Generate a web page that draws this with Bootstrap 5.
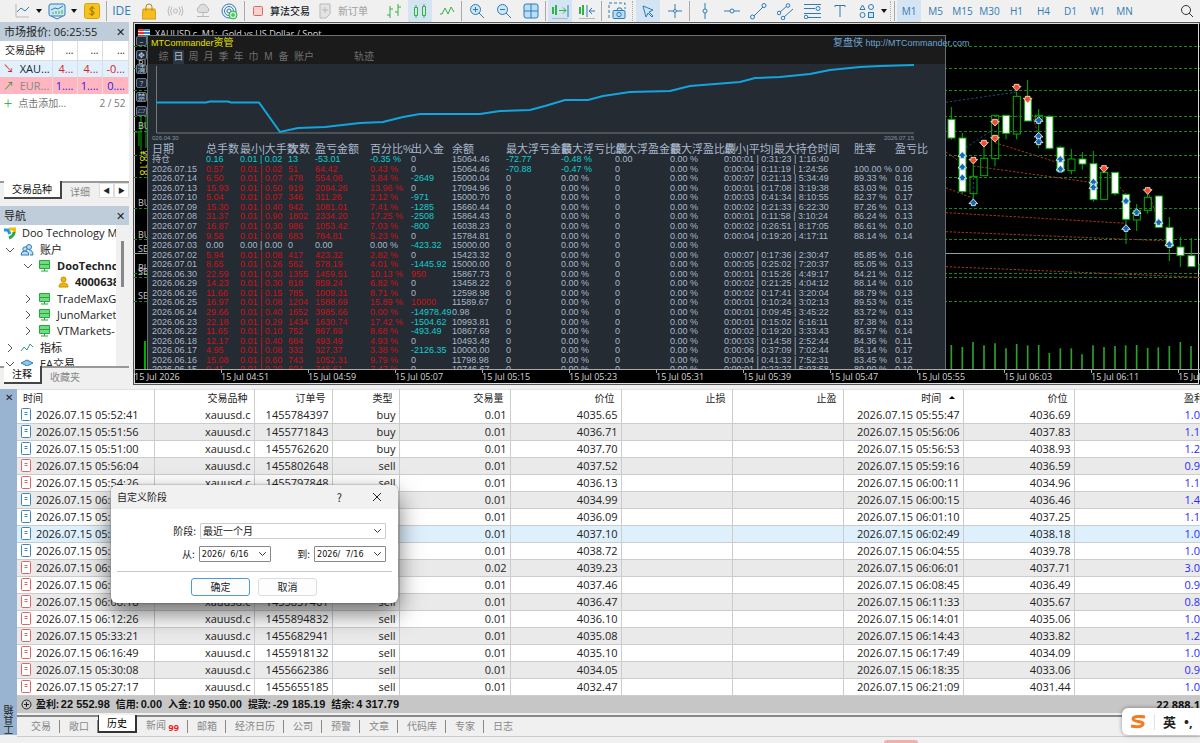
<!DOCTYPE html>
<html lang="zh-CN">
<head>
<meta charset="utf-8">
<meta name="viewport" content="width=device-width, initial-scale=1">
<title>XAUUSD.c, M1</title>
<link href="https://cdn.jsdelivr.net/npm/bootstrap@5.3.0/dist/css/bootstrap.min.css" rel="stylesheet">
<style>
body{font:11px/16px "Open Sans","Noto Sans CJK SC",sans-serif;color:#222;background:#f0f0f0;height:100vh;min-height:700px}
button,input,select{font:inherit;color:inherit}
svg{display:block;flex:none}
/* toolbar */
.tools{height:22px;padding-left:8px;background:#f0f0f0}
.tools button{border:0;background:none;padding:0;height:22px;width:27px;display:flex;align-items:center;justify-content:center;color:#2f7cb5;font-size:10px;font-weight:500;flex:none;white-space:nowrap}
.tools button.ide{font-size:12px}
.tools button.on{background:#d5e4f2;width:24px;margin:0 1px}
.tools button.caret{width:8px}
.tools button.wide{width:auto}
.tools .orders{margin-right:12px;color:#aaa}
.tools svg{fill:none;stroke:#2f7cb5}
.tools .ar{fill:#111;stroke:none}
.tools .gn{stroke:#2fb344}
.tools .gy{stroke:#b8b8b8}
.sep{width:1px;height:20px;background:#aaa;margin:0 1px;flex:none}
.grip{width:0;height:20px;border-left:1px dotted #aaa;margin:0 2px;flex:none}
/* left docks */
.dock{width:129px;flex:none}
.dock-title{background:#bfcddb;height:19px;padding:0 4px;line-height:19px}
.xbtn{border:0;background:none;padding:0;line-height:16px}
.quotes{table-layout:fixed;width:100%;line-height:16px}
.quotes td,.quotes th{border-right:1px solid #ddd;height:17px;padding:0 3px;text-align:right;font-weight:400;white-space:nowrap;overflow:hidden}
.quotes th:first-child,.quotes td:first-child{text-align:left}
.quotes thead th{height:19px;border-bottom:1px solid #ddd;font-size:10px;padding-left:5px}
.quotes .up{background:#e0f0fd;color:#e02020}
.quotes .dn{background:#ffb6c1;color:#2222ee}
.quotes .more td{border:0;color:#777;font-size:10px}
.edge{border-top:2px solid #999}
.dtab{border:0;background:none;color:#888;height:18px;padding:0 8px;line-height:16px;font-size:10px;white-space:nowrap}
.dtab.on{background:#fff;color:#111;border:solid #444;border-width:0 2px 2px 0;margin-top:-2px}
.step{width:15px;height:15px;border:1px solid #ddd;background:#fff;padding:0;font-size:7px;line-height:12px}
.tree{display:grid;grid-auto-rows:1fr;height:147px;font-size:11px}
.tree>li{display:flex;align-items:center;gap:6px;white-space:nowrap}
.l0{padding-left:3px;gap:5px}.l1{padding-left:6px}.l2{padding-left:24px}.l3{padding-left:58px}
.thumb{width:3px;height:46px;background:#888;margin:16px 5px 0}
/* chart window */
.win{border:solid #555;border-width:2px 0 1px 1px;background:#000;outline:1px solid #ddd;outline-offset:-2px}
.axis{height:15px;border-top:1px solid #aaa;font-size:9px;line-height:14px;color:#d5d5d5}
.axis span{flex:0 0 87px;white-space:nowrap}
.axis span::before{content:"";display:block;width:1px;height:3px;background:#aaa;margin-bottom:-3px}
.mtc{position:absolute;left:13px;right:254px;top:11px;bottom:0;background:#242b33;border:solid #666e76;border-width:1px 1px 0;color:#a9b8cc;font-family:"Liberation Sans","Noto Sans CJK SC",sans-serif}
.mtc-head{background:#1b1b1b;height:28px;line-height:14px;font-size:9px}
.mtc-head .cjk{font-size:10px}
.mtc-menu{gap:4px;padding-left:10px;font-size:10px;color:#707070;line-height:14px}
.mtc-menu a{color:inherit;text-decoration:none;width:11px;white-space:nowrap;text-align:center}
.mtc-menu a.duo{width:22px}
.mtc-menu a.far{margin-left:34px}
.mtc-menu a.on{background:#2c3642;color:#a9b8cc}
.site{position:absolute;left:685px;top:0;color:#6aa5d2;text-decoration:none;white-space:nowrap}
.rank-box{padding:2px 0 0 4px}
.rank{font-size:9px;line-height:9px;width:100%}
.rank tr{display:grid;grid-template-columns:54px 34px 48px 27px 55px 41px 41px 54px 55px 54px 55px 54px 130px 41px 1fr;white-space:nowrap}
.rank th{font-weight:400;font-size:11px;line-height:11px;padding:0}
.rank td{padding:0}
.rank tbody{display:grid;grid-auto-rows:1fr;height:220px}
.rank .r{color:#d01018}.rank .c{color:#10cfd0}
.knobs{position:absolute;left:2px;top:12px;width:11px}
.knobs button{display:flex;justify-content:center;align-items:center;width:11px;height:10px;padding:0;border:1px solid #66788e;background:#222c38;color:#b8c8dc;font-size:8px;line-height:8px;border-radius:2px}
/* toolbox */
.strip{width:17px;background:#99b4d1;flex:none;font-size:10px}
.strip span{writing-mode:vertical-rl;transform:rotate(180deg);line-height:16px;white-space:nowrap}
.hist{table-layout:fixed;width:100%;line-height:16px;background:#fff}
.hist th,.hist td{height:17px;padding:0 3px 0 4px;border-right:1px solid #ccc;text-align:right;font-weight:400;white-space:nowrap}
.hist td{border-bottom:1px solid #ccc}
.hist th{padding:0 6px;font-size:10px}
.hist th:first-child,.hist td:first-child{text-align:left}
.hist th:last-child,.hist td:last-child{border-right:0;padding-right:0}
.hist tbody tr:nth-child(even){background:#eaeaea}
.hist tbody tr.sel{background:#dff0fd}
.hist td:last-child{color:#2a2aff}
.hist svg{display:inline-block;vertical-align:-2px;margin-right:5px}
.total{background:#c6c6c6;height:17px;font-weight:700;line-height:17px;color:#111}
.total dl{display:flex;gap:6px;margin:0}
.total dt{font-size:10px}
.total dl div{display:flex;gap:2px}
.total dd{margin:0;font-family:"Liberation Sans",sans-serif}
.btabs{border-top:2px solid #888;margin-top:2px;height:21px;padding-left:5px;font-size:10px}
.btabs button{border:0;background:none;color:#888;padding:0 9px;height:18px;white-space:nowrap;position:relative}
.btabs button::after{content:"";position:absolute;right:0;top:3px;height:13px;border-right:1px solid #888}
.btabs button:last-child::after{display:none}
.btabs button.on{background:#fff;color:#000;border:solid #333;border-width:0 2px 2px 1px;margin-top:-2px;padding:0 8px}
.btabs button.on::after{display:none}
.state{height:7px;border-top:1px solid #ccc;padding-right:282px}
.state i{width:34px;height:3px;background:#efb0ac;border-radius:3px 3px 0 0}
/* period dialog */
.dlg{position:absolute;left:111px;top:96px;width:287px;height:118px;background:#fff;border-radius:6px;box-shadow:0 10px 24px rgba(0,0,0,.55),0 0 2px rgba(0,0,0,.5);z-index:3;font-size:10px;line-height:14px;font-family:"Noto Sans CJK SC",sans-serif;color:#222}
.dlg-head{background:#f1f1f1;height:24px;border-radius:6px 6px 0 0;padding:0 16px 0 6px}
.dlg-row{height:16px;margin-top:14px;padding-right:12px}
.dlg-row+.dlg-row{margin-top:7px;padding-left:71px}
.dlg hr{margin:9px 6px 6px}
.dlg .form-select{font-size:10px;line-height:14px;padding:0 16px 0 2px;height:16px;min-height:0;border-radius:1px;border-color:#ccc;background-position:right 3px center;background-size:9px 8px;color:#111}
.dlg .day{font-size:9px;border-color:#888;width:72px;font-family:"DejaVu Sans Condensed",sans-serif}
.dlg .btn{font-size:10px;line-height:14px;padding:0;width:59px;height:18px;border:1px solid #ddd;border-radius:3px;background:#fdfdfd}
.dlg .btn.ok{border-color:#4a9be0}
.ime{position:absolute;right:0;bottom:8px;width:78px;height:27px;background:#fff;border-radius:6px 0 0 6px;box-shadow:0 0 4px rgba(0,0,0,.4);z-index:4;font-size:13px;font-weight:700}
</style>
</head>
<body class="d-flex flex-column overflow-hidden">
<header class="tools d-flex align-items-center">
 <button aria-label="图表"><svg width="16" height="16"><path d="M2 1v13h13" class="gy"/><path d="M3 9l4-4 4 3 4-4"/></svg></button>
 <button class="caret" aria-label="更多"><svg width="6" height="4"><path class="ar" d="M0 0h6L3 4z"/></svg></button>
 <button aria-label="指标"><svg width="18" height="17"><rect x="1" y="1" width="16" height="12" rx="2" fill="#cde6f7"/><path d="M3 7l4-2 3 1 5-3"/><path class="gn" d="M5 11V9M8 11V8M11 11V8M14 11V7"/><path d="M3 13l6 3 6-3"/></svg></button>
 <button class="caret" aria-label="更多"><svg width="6" height="4"><path class="ar" d="M0 0h6L3 4z"/></svg></button>
 <button aria-label="货币"><svg width="16" height="16"><rect x=".5" y=".5" width="15" height="15" rx="2" fill="#f6c21c" stroke="#d9a406"/><path d="M10.500 5.500C9 4 5.500 4.500 5.800 6.500S10.500 8 10.200 10 6.500 12 5.200 10.500M8 3v10" stroke="#9b6d00"/></svg></button>
 <span class="sep"></span>
 <button class="ide">IDE</button>
 <button aria-label="市场"><svg width="14" height="17"><path d="M1 6h12l1 10H0z" fill="#f5bd1f" stroke="#d39c0a"/><path d="M4 8V4a3 3 0 0 1 6 0v4" stroke="#b98600"/></svg></button>
 <button aria-label="信号"><svg width="17" height="12"><g class="gy"><circle cx="8.500" cy="6" r="2"/><path d="M5 2q-3 4 0 8M12 2q3 4 0 8M2.500 1q-3 5 0 10M14.500 1q3 5 0 10"/></g></svg></button>
 <button aria-label="云"><svg width="16" height="16"><path class="gy" fill="#ddd" d="M4 9.500a3 3 0 0 1 0-5.500 4.200 4.200 0 0 1 8 0 3 3 0 0 1 0 5.500z"/><path class="gy" d="M8 10v3M2 13.500h12"/></svg></button>
 <button aria-label="社区"><svg width="17" height="17"><circle cx="8" cy="8" r="7"/><circle cx="8" cy="8" r="4.500"/><circle cx="8" cy="8" r="2"/><circle cx="12" cy="12" r="4" fill="#baf0c2" class="gn"/><path class="gn" d="M12 10v4M10 12h4"/></svg></button>
 <span class="sep"></span>
 <button class="wide text-dark ms-1"><svg width="20" height="12"><rect x="3.500" y="1.500" width="9" height="9" rx="1" fill="#fbd3cc" stroke="#e06a5a"/></svg>算法交易</button>
 <button class="wide orders ms-2"><svg width="20" height="16"><path class="gy" fill="#e4e4e4" d="M2 1h10v10l-4 4H2zM7 4v6M4 7h6"/></svg>新订单</button>
 <button aria-label="柱状图"><svg width="16" height="16"><path class="gn" d="M4 3v12M1 12h3M4 6h3M12 1v12M9 9h3M12 4h3"/></svg></button>
 <button class="on" aria-label="蜡烛图"><svg width="16" height="16"><path class="gn" d="M2.500 4.500h3v8h-3zM10.500 3.500h3v9h-3zM4 2v2.500M4 12.500V15M12 1v2.500M12 12.500V15"/></svg></button>
 <button aria-label="折线图"><svg width="16" height="12"><path class="gn" d="M1 9h2l3-6 3 6 3-7 3 5"/></svg></button>
 <span class="sep"></span>
 <button aria-label="放大"><svg width="16" height="16"><circle cx="6.500" cy="6.500" r="5" fill="#cde6f7"/><path d="M10 10l5 5M4 6.500h5M6.500 4v5"/></svg></button>
 <button aria-label="缩小"><svg width="16" height="16"><circle cx="6.500" cy="6.500" r="5" fill="#cde6f7"/><path d="M10 10l5 5M4 6.500h5"/></svg></button>
 <button aria-label="平铺"><svg width="16" height="16"><rect x="1" y="1" width="14" height="14" rx="2" fill="#b9def5"/><path d="M8 1v14M1 8h14"/></svg></button>
 <span class="sep"></span>
 <button class="on" aria-label="自动滚动"><svg width="18" height="16"><path class="gn" d="M2 4v7M5 2v10" stroke-width="2"/><path class="gn" d="M8 7.500h7M12 4.500l3 3-3 3"/><path d="M17 2v12"/><path class="gy" d="M1 15.500h16"/></svg></button>
 <button aria-label="图表偏移"><svg width="18" height="16"><path class="gn" d="M2 4v7M5 2v10" stroke-width="2"/><path d="M9 2v12M17 8h-6M14 5l-3 3 3 3"/><path class="gy" d="M1 15.500h16"/></svg></button>
 <span class="sep"></span>
 <button aria-label="截图"><svg width="18" height="18"><path stroke-dasharray="3 2" d="M1 16V1h16v6"/><rect x="5" y="8.500" width="12" height="8" rx="1" fill="#b9def5"/><circle cx="11" cy="12.500" r="2.200"/><path d="M9 8l1-2h3l1 2"/></svg></button>
 <span class="grip"></span>
 <button class="on" aria-label="光标"><svg width="14" height="14"><path fill="#cde6f7" d="M2 2l10 4-4 2 4 4-1 1-4-4-2 4z"/></svg></button>
 <button aria-label="十字"><svg width="16" height="16"><path d="M8 1v5M8 10v5M1 8h5M10 8h5"/><circle cx="8" cy="8" r="1.500"/></svg></button>
 <span class="sep"></span>
 <button aria-label="垂直线"><svg width="16" height="16"><path d="M8 0v6M8 10v6"/><circle cx="8" cy="8" r="2"/></svg></button>
 <button aria-label="水平线"><svg width="16" height="16"><path d="M0 8h6M10 8h6"/><circle cx="8" cy="8" r="2"/></svg></button>
 <button aria-label="趋势线"><svg width="17" height="17"><path d="M4 13l9-9"/><circle cx="2.500" cy="14" r="2"/><circle cx="14" cy="2.500" r="2"/></svg></button>
 <button aria-label="通道"><svg width="17" height="17"><path d="M3 9l7-6M7 14l9-8"/><circle cx="2" cy="10" r="1.800"/><circle cx="11" cy="2.500" r="1.800"/><circle cx="6" cy="15" r="1.800"/></svg></button>
 <button aria-label="斐波纳契"><svg width="17" height="16"><path d="M0 1.500h17M0 5.500h11M0 10.500h17M4 14.500h13"/><circle cx="14" cy="5.500" r="2"/><circle cx="2" cy="14" r="1.800"/></svg></button>
 <button aria-label="文字"><svg width="14" height="14"><path d="M2 3V1.500h10V3M7 1.500V13"/></svg></button>
 <button aria-label="图形"><svg width="16" height="16"><path d="M3.500 2L6 6.500H1z"/><circle cx="12" cy="4" r="2.500"/><circle cx="3.500" cy="12" r="2.500"/><rect x="9.500" y="9.500" width="5" height="5" fill="#cde6f7"/></svg></button>
 <button class="caret" aria-label="更多"><svg width="6" height="4"><path class="ar" d="M0 0h6L3 4z"/></svg></button>
 <span class="grip"></span><span class="sep"></span>
 <button class="on">M1</button><button>M5</button><button>M15</button><button>M30</button><button>H1</button><button>H4</button><button>D1</button><button>W1</button><button>MN</button>
 <button class="ms-auto" aria-label="搜索"><svg width="14" height="14" style="stroke:#333"><circle cx="6" cy="6" r="4.500"/><path d="M9 9l4 4"/></svg></button>
</header>

<main class="d-flex flex-fill" style="min-height:0">
 <aside class="dock d-flex flex-column me-1">
  <section class="bg-white d-flex flex-column">
   <div class="dock-title d-flex justify-content-between"><span>市场报价: 06:25:55</span><button class="xbtn" aria-label="关闭">✕</button></div>
   <table class="quotes">
    <colgroup><col style="width:52px"><col style="width:25px"><col style="width:25px"><col></colgroup>
    <thead><tr><th>交易品种</th><th>...</th><th>...</th><th>...</th></tr></thead>
    <tbody>
     <tr class="up"><td>↘ &nbsp;<span class="text-dark">XAU...</span></td><td>4...</td><td>4...</td><td>-0...</td></tr>
     <tr class="dn"><td><span style="color:#2a9d3a">↗</span> &nbsp;<span style="color:#888">EUR...</span></td><td>1....</td><td>1....</td><td>0....</td></tr>
     <tr class="more"><td colspan="2"><span style="color:#2a9d3a">＋</span>&nbsp; 点击添加...</td><td colspan="2">2 / 52</td></tr>
    </tbody>
   </table>
   <div style="height:70px"></div>
  </section>
  <nav class="edge d-flex align-items-start mb-1" style="height:22px"><button class="dtab on ms-1">交易品种</button><button class="dtab">详细</button><button class="step ms-auto">◀</button><button class="step">▶</button></nav>
  <section class="d-flex flex-column flex-fill" style="min-height:0">
   <div class="dock-title d-flex justify-content-between flex-shrink-0"><span>导航</span><button class="xbtn" aria-label="关闭">✕</button></div>
   <div class="d-flex flex-fill overflow-hidden" style="min-height:0">
    <ul class="tree list-unstyled m-0 bg-white flex-fill overflow-hidden" id="tree"></ul>
    <div class="thumb flex-shrink-0"></div>
   </div>
   <nav class="edge d-flex align-items-start flex-shrink-0" style="height:23px"><button class="dtab on ms-1">注释</button><button class="dtab">收藏夹</button></nav>
  </section>
 </aside>

 <section class="win d-flex flex-column flex-fill mb-1 overflow-hidden" style="min-width:0">
  <div class="position-relative flex-fill overflow-hidden" style="min-height:0">
   <svg width="100%" height="100%" id="chart" aria-label="XAUUSD"><g transform="translate(-134 -24)" id="plot"></g></svg>
   <div class="knobs d-flex flex-column gap-1" id="knobs"></div>
   <div class="mtc">
    <div class="mtc-head">
     <div style="color:#e2e200;padding-left:3px">MTCommander<span class="cjk">资管</span></div>
     <nav class="mtc-menu d-flex"><a href="#">综</a><a href="#" class="on">日</a><a href="#">周</a><a href="#">月</a><a href="#">季</a><a href="#">年</a><a href="#">巾</a><a href="#">M</a><a href="#">备</a><a href="#" class="duo">账户</a><a href="#" class="duo far">轨迹</a></nav>
     <a class="site" href="#"><span class="cjk">复盘侠</span> http://MTCommander.com</a>
    </div>
    <svg width="100%" height="70" viewBox="148 64 797 70" preserveAspectRatio="none" fill="none"><path d="M156.500 66v67H914" stroke="#777"/><path d="M156 102.500h50l4-1h18l3 1h28L280 132l18-4 27-1 35-4 23-1 20-5 17-3h60l20-3 30-1 15-4 20-6h23l15-4 27-4 40-1 20-5 50-4 15-4 25-1 30-3 20-4 30-3 20-1 34-1" stroke="#12a5e0" stroke-width="2"/></svg>
    <div class="d-flex justify-content-between" style="font-size:6px;line-height:8px;color:#8895a3;padding:0 31px 0 4px"><span>026.04.30</span><span>2026.07.15</span></div>
    <div class="rank-box"><table class="rank"><thead><tr id="rankHead"></tr></thead><tbody id="rankBody"></tbody></table></div>
   </div>
  </div>
  <div class="axis d-flex position-relative overflow-hidden flex-shrink-0" id="axis"></div>
 </section>
</main>

<section class="d-flex position-relative flex-shrink-0">
 <aside class="strip d-flex flex-column justify-content-between align-items-center mb-2"><button class="xbtn" aria-label="关闭">✕</button><span>工具箱</span></aside>
 <div class="flex-fill" style="min-width:0">
  <table class="hist border-top">
   <colgroup><col style="width:137px"><col style="width:100px"><col style="width:78px"><col style="width:67px"><col style="width:111px"><col style="width:111px"><col style="width:111px"><col style="width:111px"><col style="width:120px"><col style="width:111px"><col></colgroup>
   <thead><tr><th>时间</th><th>交易品种</th><th>订单号</th><th>类型</th><th>交易量</th><th>价位</th><th>止损</th><th>止盈</th><th>时间 &nbsp;<svg class="m-0" style="vertical-align:3px" width="10" height="3"><path d="M2 3h6L5 0z"/></svg></th><th>价位</th><th class="overflow-hidden"><span style="margin-right:-4px">盈利</span></th></tr></thead>
   <tbody id="histBody"></tbody>
  </table>
  <div class="total d-flex align-items-center ps-1 gap-1"><svg width="11" height="11" fill="none" stroke="#222"><circle cx="5.500" cy="5.500" r="4.500"/><path d="M5.500 3v5M3 5.500h5"/></svg>
   <dl><div><dt>盈利:</dt><dd>22 552.98</dd></div><div><dt>信用:</dt><dd>0.00</dd></div><div><dt>入金:</dt><dd>10 950.00</dd></div><div><dt>提款:</dt><dd>-29 185.19</dd></div><div><dt>结余:</dt><dd>4 317.79</dd></div></dl><span class="ms-auto">22 888.1</span></div>
  <nav class="btabs d-flex align-items-start"><button>交易</button><button>敞口</button><button class="on">历史</button><button>新闻 <small style="color:#f02020;font-weight:700;font-size:9px;vertical-align:-2px">99</small></button><button>邮箱</button><button>经济日历</button><button>公司</button><button>预警</button><button>文章</button><button>代码库</button><button>专家</button><button>日志</button></nav>
  <footer class="state d-flex justify-content-end align-items-end"><i></i></footer>
 </div>

 <form class="dlg">
  <div class="dlg-head d-flex align-items-center"><span class="me-auto">自定义阶段</span><span style="font-size:11px;margin-right:30px">?</span><button type="button" class="xbtn" aria-label="关闭"><svg width="10" height="10" stroke="#222"><path d="M1 1l8 8M9 1l-8 8"/></svg></button></div>
  <div class="dlg-row d-flex align-items-center justify-content-end"><label for="span" class="me-1">阶段:</label><select id="span" class="form-select" style="width:186px"><option>最近一个月</option></select></div>
  <div class="dlg-row d-flex align-items-center"><label for="from" class="me-1">从:</label><input id="from" class="form-select day" value="2026/  6/16"><label for="to" class="ms-auto me-1">到:</label><input id="to" class="form-select day" value="2026/  7/16"></div>
  <hr>
  <div class="d-flex gap-2" style="padding-left:80px"><button type="button" class="btn ok">确定</button><button type="button" class="btn">取消</button></div>
 </form>
 <div class="ime d-flex align-items-center"><svg class="ms-2" width="16" height="14" fill="none" stroke="#f47b20" stroke-width="3"><path d="M15 2C10 1 3 1 3 4s11 2 10 5-7 3-12 2"/></svg><span class="border-start ms-2 ps-2">英</span><span class="ms-2">•,</span></div>
</section>

<script src="https://cdn.jsdelivr.net/npm/bootstrap@5.3.0/dist/js/bootstrap.bundle.min.js"></script>
<script>
const $ = id => document.getElementById(id);

// navigator
const chev = open => `<svg width="8" height="8" fill="none" stroke="#555"><path d="${open ? 'M0 2l4 4 4-4' : 'M2 0l4 4-4 4'}"/></svg>`;
const srv = '<svg width="13" height="12" fill="#6fdc82" stroke="#27a83c"><path d="M1.500 .500h10v4h-10zM1.500 4.500h10v4h-10zM6.500 9v2M3 11h7"/></svg>';
const ppl = '<svg width="14" height="12" fill="#b9def5" stroke="#2f7cb5"><circle cx="9" cy="3" r="2.500"/><circle cx="5" cy="5" r="2.200"/><path d="M1 11q0-4 4-4t4 4zM10 11h3q0-5-4-5"/></svg>';
$('tree').innerHTML = [
 ['l0', '<svg width="13" height="13" fill="none" stroke-width="3"><path stroke="#1d9be0" d="M1 3h4l2 4"/><path stroke="#f2c200" d="M6 2h6l-1 4"/><path stroke="#28a745" d="M11 5q0 4-5 6"/></svg>Doo Technology M'],
 ['l1', chev(1) + ' ' + ppl + '账户'],
 ['l2', chev(1) + ' ' + srv + '<b>DooTechnc</b>'],
 ['l3', '<svg width="11" height="12" fill="#f2b705" stroke="#c98f00"><circle cx="5.500" cy="3.500" r="2.500"/><path d="M1 11q0-4 4.500-4t4.500 4z"/></svg><b>4000638</b>'],
 ['l2', chev(0) + ' ' + srv + 'TradeMaxG'],
 ['l2', chev(0) + ' ' + srv + 'JunoMarket'],
 ['l2', chev(0) + ' ' + srv + 'VTMarkets-'],
 ['l1', chev(0) + ' <svg width="14" height="10" fill="none" stroke="#2f9c8a"><path d="M1 8l3-4 3 3 3-6 3 3"/></svg>指标'],
 ['l1', chev(1) + ' <svg width="14" height="10" fill="#8cc8ee" stroke="#2f7cb5"><path d="M1 4l6-3 6 3-6 3z"/></svg>EA交易']
].map(r => `<li class="${r[0]}">${r[1]}</li>`).join('');

$('knobs').innerHTML = ['–', '✥', '清', '?', '禁', '▱'].map(t => `<button>${t}</button>`).join('');

$('axis').innerHTML = ['15 Jul 2026', '15 Jul 04:51', '15 Jul 04:59', '15 Jul 05:07', '15 Jul 05:15', '15 Jul 05:23', '15 Jul 05:31', '15 Jul 05:39', '15 Jul 05:47', '15 Jul 05:55', '15 Jul 06:03', '15 Jul 06:11', '15 Jul 06:19'].map(t => `<span>${t}</span>`).join('');

// daily statistics
$('rankHead').innerHTML = '日期,总手数,最小|大手数,次数,盈亏金额,百分比%,出入金,余额,最大浮亏金额,最大浮亏比例,最大浮盈金额,最大浮盈比例,最小|平均|最大持仓时间,胜率,盈亏比'.split(',').map(t => `<th>${t}</th>`).join('');
const days = `持仓,0.16,0.02,13,-53.01,-0.35,0,15064.46,0:00:01 | 0:31:23 | 1:16:40,,
2026.07.15,0.57,0.02,51,64.42,0.43,0,15064.46,0:00:04 | 0:11:19 | 1:24:56,100.00 %,0.00
2026.07.14,6.50,0.07,478,554.08,3.84,-2649,15000.04,0:00:07 | 0:21:13 | 5:34:49,89.33 %,0.16
2026.07.13,15.93,0.50,919,2094.26,13.96,0,17094.96,0:00:01 | 0:17:08 | 3:19:38,83.03 %,0.15
2026.07.10,5.04,0.07,346,311.26,2.12,-971,15000.70,0:00:03 | 0:41:34 | 8:10:55,82.37 %,0.17
2026.07.09,15.30,0.40,942,1081.01,7.41,-1285,15660.44,0:00:02 | 0:21:33 | 6:22:30,87.26 %,0.13
2026.07.08,31.37,0.90,1802,2334.20,17.25,-2508,15864.43,0:00:01 | 0:11:58 | 3:10:24,86.24 %,0.13
2026.07.07,16.87,0.30,986,1053.42,7.03,-800,16038.23,0:00:02 | 0:26:51 | 8:17:05,86.61 %,0.10
2026.07.06,9.58,0.08,683,784.81,5.23,0,15784.81,0:00:04 | 0:19:20 | 4:17:11,88.14 %,0.14
2026.07.03,0.00,0.00,0,0.00,0.00,-423.32,15000.00,,,
2026.07.02,5.94,0.08,417,423.32,2.82,0,15423.32,0:00:07 | 0:17:36 | 2:30:47,85.85 %,0.16
2026.07.01,8.65,0.26,562,578.19,4.01,-1445.92,15000.00,0:00:05 | 0:25:02 | 7:20:37,85.05 %,0.13
2026.06.30,22.59,0.30,1355,1459.51,10.13,950,15867.73,0:00:01 | 0:15:26 | 4:49:17,84.21 %,0.12
2026.06.29,14.23,0.30,818,859.24,6.82,0,13458.22,0:00:02 | 0:21:25 | 4:04:12,88.14 %,0.10
2026.06.26,11.66,0.15,785,1009.31,8.71,0,12598.98,0:00:02 | 0:17:41 | 3:20:04,88.79 %,0.13
2026.06.25,16.97,0.08,1204,1588.69,15.89,10000,11589.67,0:00:01 | 0:10:24 | 3:02:13,89.53 %,0.15
2026.06.24,29.66,0.40,1652,3985.66,0.00,-14978.49,0.98,0:00:01 | 0:09:45 | 3:45:22,83.72 %,0.13
2026.06.23,22.18,0.29,1434,1630.74,17.42,-1504.62,10993.81,0:00:01 | 0:15:02 | 6:16:11,87.38 %,0.13
2026.06.22,11.65,0.10,752,867.69,8.68,-493.49,10867.69,0:00:02 | 0:19:20 | 3:33:43,86.57 %,0.14
2026.06.18,12.17,0.40,684,493.49,4.93,0,10493.49,0:00:03 | 0:14:58 | 2:52:44,84.36 %,0.11
2026.06.17,4.95,0.08,332,327.37,3.38,-2126.35,10000.00,0:00:06 | 0:37:09 | 7:02:44,86.14 %,0.17
2026.06.16,15.08,0.60,743,1052.31,9.79,0,11798.98,0:00:04 | 0:41:32 | 7:52:31,83.45 %,0.12
2026.06.15,9.41,0.29,604,746.61,7.47,0,10746.67,0:00:01 | 0:22:27 | 5:03:58,89.90 %,0.10`.split('\n');
$('rankBody').innerHTML = days.map((l, i) => {
 const d = l.split(','), k = i == 0 ? 'c' : d[3] == '0' ? '' : 'r';
 const io = d[6] == '0' ? '' : d[6][0] == '-' ? 'c' : 'r', w = i < 2 ? 'c' : '';
 const cells = [[d[0], ''], [d[1], k], [(d[3] == '0' ? '0.00' : '0.01') + ' | ' + d[2], k], [d[3], k], [d[4], k], [d[5] + ' %', k], [d[6], io], [d[7], ''],
  [['-72.77', '-70.88'][i] || '0', w], [(['-0.48', '-0.47'][i] || '0.00') + ' %', w], [i ? '0' : '0.00', ''], ['0.00 %', ''], [d[8], ''], [d[9], ''], [d[10], '']];
 return '<tr>' + cells.map(c => `<td class="${c[1]}">${c[0]}</td>`).join('') + '</tr>';
}).join('');

// deal history
const deals = `05:52:41,1455784397,b,4035.65,05:55:47,4036.69,1.0
05:51:56,1455771843,b,4036.71,05:56:06,4037.83,1.1
05:51:00,1455762620,b,4037.70,05:56:53,4038.93,1.2
05:56:04,1455802648,s,4037.52,05:59:16,4036.59,0.9
05:54:26,1455797848,s,4036.13,06:00:11,4034.96,1.1
06:00:05,1455823310,b,4034.99,06:00:15,4036.46,1.4
05:59:21,1455819027,b,4036.09,06:01:10,4037.25,1.1
05:58:40,1455814275,b,4037.10,06:02:49,4038.18,1.0
05:57:13,1455808114,b,4038.72,06:04:55,4039.78,1.0
06:05:12,1455848820,s,4039.23,06:06:01,4037.71,3.0
06:03:48,1455841066,s,4037.46,06:08:45,4036.49,0.9
06:08:18,1455857461,s,4036.47,06:11:33,4035.67,0.8
06:12:26,1455894832,s,4036.10,06:14:01,4035.06,1.0
05:33:21,1455682941,s,4035.08,06:14:43,4033.82,1.2
06:16:49,1455918132,s,4035.10,06:17:49,4034.09,1.0
05:30:08,1455662386,s,4034.05,06:18:35,4033.06,0.9
05:27:17,1455655185,s,4032.47,06:21:09,4031.44,1.0`.split('\n');
$('histBody').innerHTML = deals.map((l, i) => {
 const d = l.split(','), c = d[2] == 'b' ? '#3b86c0' : '#e06464';
 return `<tr class="${i == 7 ? 'sel' : ''}"><td><svg width="10" height="13" fill="#fff" stroke="${c}"><rect x=".5" y=".5" width="9" height="12" rx="1"/><path d="M3.500 4.500h3M3.500 6.500h3"/></svg>2026.07.15 ${d[0]}</td><td>xauusd.c</td><td>${d[1]}</td><td>${d[2] == 'b' ? 'buy' : 'sell'}</td><td>${i == 9 ? '0.02' : '0.01'}</td><td>${d[3]}</td><td></td><td></td><td>2026.07.15 ${d[4]}</td><td>${d[5]}</td><td>${d[6]}</td></tr>`;
}).join('');

// price chart
let s = '<g stroke-dasharray="3 2" stroke="#1c861c">' + [46, 68, 90, 116, 131, 155, 177, 208, 239, 273, 277, 301].map(y => `<path d="M134 ${y}.500h1800"/>`).join('') + '</g><path d="M134 253.500h1800" stroke="#8fa39a"/>';
s += '<g fill="none" stroke="#00b000"><path d="M141 150v-36h5v34M135 132h4v14"/><path d="M145 341v28" stroke-width="2"/></g>';
s += '<g fill="#c8c8c8" font-size="9">' + [['BU', 67], ['BU', 129], ['BU', 206], ['BU', 238], ['SE', 252], ['BU', 271], ['SE', 275], ['SE', 299]].map(t => `<text x="138" y="${t[1]}">${t[0]}</text>`).join('') + '</g>';
s += '<text transform="translate(140 150) rotate(90)" font-size="10" fill="#e8e800">¥8.18</text>';
s += '<g><rect x="138" y="29" width="6" height="9" fill="#e33"/><rect x="144" y="29" width="6" height="9" fill="#38c"/><path d="M138 31.500h12M138 34.500h12" stroke="#fff"/></g><text x="155" y="37" font-size="9" fill="#ddd">XAUUSD.c, M1:&#160; Gold vs US Dollar / Spot</text>';
s += '<g transform="translate(930 60) scale(.33333)" stroke-width="3" fill="none">';
s += '<g stroke="#a5381c" stroke-dasharray="7 5"><path d="M47 275l50 35M47 383l83 32M130 318l360 50M195 248l196 62M293 118l33 110M47 458l541 32M47 515l671 28M47 620l763 32M522 326l66 77M653 392l33 95"/></g><g stroke="#1b4a80" stroke-dasharray="7 6"><path d="M47 127l213-31M97 270l98-65M130 301v127"/></g>';
[[64,141,178,234,239,1],[97,219,234,395,400,1],[130,292,349,401,430,0],[162,240,295,347,347,0],[195,166,166,296,320,0],[228,166,166,220,238,1],[260,95,109,222,238,0],[293,60,117,183,183,1],[326,147,166,180,265,0],[358,166,169,265,269,1],[391,258,262,335,335,1],[424,267,297,332,343,0],[457,276,297,312,328,1],[490,273,311,419,425,1],[522,316,337,418,418,0],[555,337,337,401,407,1],[588,403,403,478,552,1],[620,432,451,480,513,0],[653,392,412,451,461,0],[686,406,408,502,505,1],[718,471,502,560,603,1],[751,531,561,587,621,1],[784,534,587,620,620,1],[817,605,613,627,630,0]]
 .forEach(c => s += `<g stroke="#00b000"><path d="M${c[0]} ${c[1]}V${c[2]}M${c[0]} ${c[3]}V${c[4]}"/><rect x="${c[0] - 10}" y="${c[2]}" width="21" height="${c[3] - c[2]}" fill="${c[5] ? '#fff' : 'none'}"/></g>`);
[[260,82],[293,118],[195,187],[195,235],[162,250],[130,301],[522,326],[653,392]].forEach(p => s += `<path d="M${p[0] - 7} ${p[1] - 9}h14v6h6l-13 14-13-14h6z" fill="#ef4d2b" stroke="#f3c9bd"/>`);
[[97,286],[97,321],[97,353],[130,428],[326,181],[326,228],[326,245],[391,298],[391,327],[490,366],[490,382],[588,423],[588,505],[620,457],[686,487],[718,553]].forEach(p => s += `<path d="M${p[0] - 6} ${p[1] + 9}h12v-6h7l-13-14-13 14h7z" fill="#1467b8" stroke="#cfe0f0"/>`);
[855,861,846,856,850,865,852,856,855,879,865,865,883,856,861,858,856,855,864,862,858,846,858].forEach((y, i) => s += `<path d="M${Math.round(64 + i * 32.7)} ${y}V930" stroke="#2ca02c" stroke-width="5"/>`);
$('plot').innerHTML = s + '</g>';
</script>
</body>
</html>
